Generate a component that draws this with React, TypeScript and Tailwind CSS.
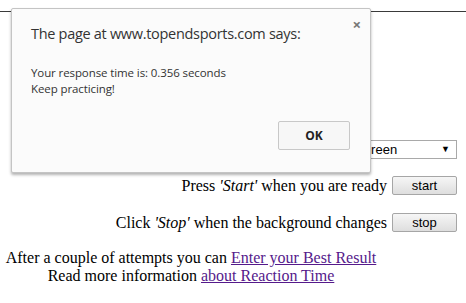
import React from "react";

const serif = { fontFamily: '"Liberation Serif", "Times New Roman", serif' };

const Button = ({ label }: { label: string }) => (
  <div className="ml-[5px] flex h-[19px] w-[65px] items-center justify-center rounded-[2px] border border-[#a6a6a6] bg-gradient-to-b from-[#f6f6f6] to-[#dedede] font-['Liberation_Sans',Arial,sans-serif] text-[13px] text-black">
    {label}
  </div>
);

export default function App() {
  return (
    <div
      className="relative h-[303px] w-[466px] overflow-hidden bg-white text-[16px] text-black"
      style={serif}
    >
      {/* top rule */}
      <div className="mt-[11px] border-t border-[#3a3a3a]" />

      {/* controls */}
      <div className="flex flex-col items-end pr-[9px] pt-[128px]">
        <div className="flex h-[19px] w-[100px] items-center justify-between border border-[#a9a9a9] bg-white pl-[3px] pr-[6px] font-['Liberation_Sans',Arial,sans-serif] text-[13px]">
          <span>Green</span>
          <span className="text-[9px]">▼</span>
        </div>
        <div className="mt-[17px] flex items-center leading-[18px]">
          <span>
            Press <i>'Start'</i> when you are ready
          </span>
          <Button label="start" />
        </div>
        <div className="mt-[18px] flex items-center leading-[18px]">
          <span>
            Click <i>'Stop'</i> when the background changes
          </span>
          <Button label="stop" />
        </div>
      </div>

      {/* info lines */}
      <div className="mt-[17px] w-[382px] text-center leading-[18px]">
        <p>
          After a couple of attempts you can{" "}
          <a href="#" className="text-[#551a8b] underline">
            Enter your Best Result
          </a>
        </p>
        <p>
          Read more information{" "}
          <a href="#" className="text-[#551a8b] underline">
            about Reaction Time
          </a>
        </p>
      </div>

      {/* alert dialog */}
      <div className="absolute left-[11px] top-[8px] h-[165px] w-[360px] rounded-[2px] border border-[#c4c4c4] bg-[#fbfbfb] font-['Open_Sans','Noto_Sans',sans-serif] text-[#333] shadow-[0_2px_3px_rgba(0,0,0,0.3)]">
        <div className="absolute right-[9px] top-[8px] text-[15px] font-bold leading-none text-[#777]">
          ×
        </div>
        <h1 className="ml-[19px] mt-[14px] text-[14.5px] leading-[22px] tracking-[-0.3px]">
          The page at www.topendsports.com says:
        </h1>
        <div className="ml-[19px] mt-[20px] text-[11.5px] leading-[16px] tracking-[-0.1px]">
          <p>Your response time is: 0.356 seconds</p>
          <p>Keep practicing!</p>
        </div>
        <div className="absolute left-[266px] top-[112px] flex h-[29px] w-[72px] items-center justify-center rounded-[2px] border border-[#c8c8c8] bg-[#f7f7f7] text-[12px] font-bold text-[#222]">
          OK
        </div>
      </div>
    </div>
  );
}
